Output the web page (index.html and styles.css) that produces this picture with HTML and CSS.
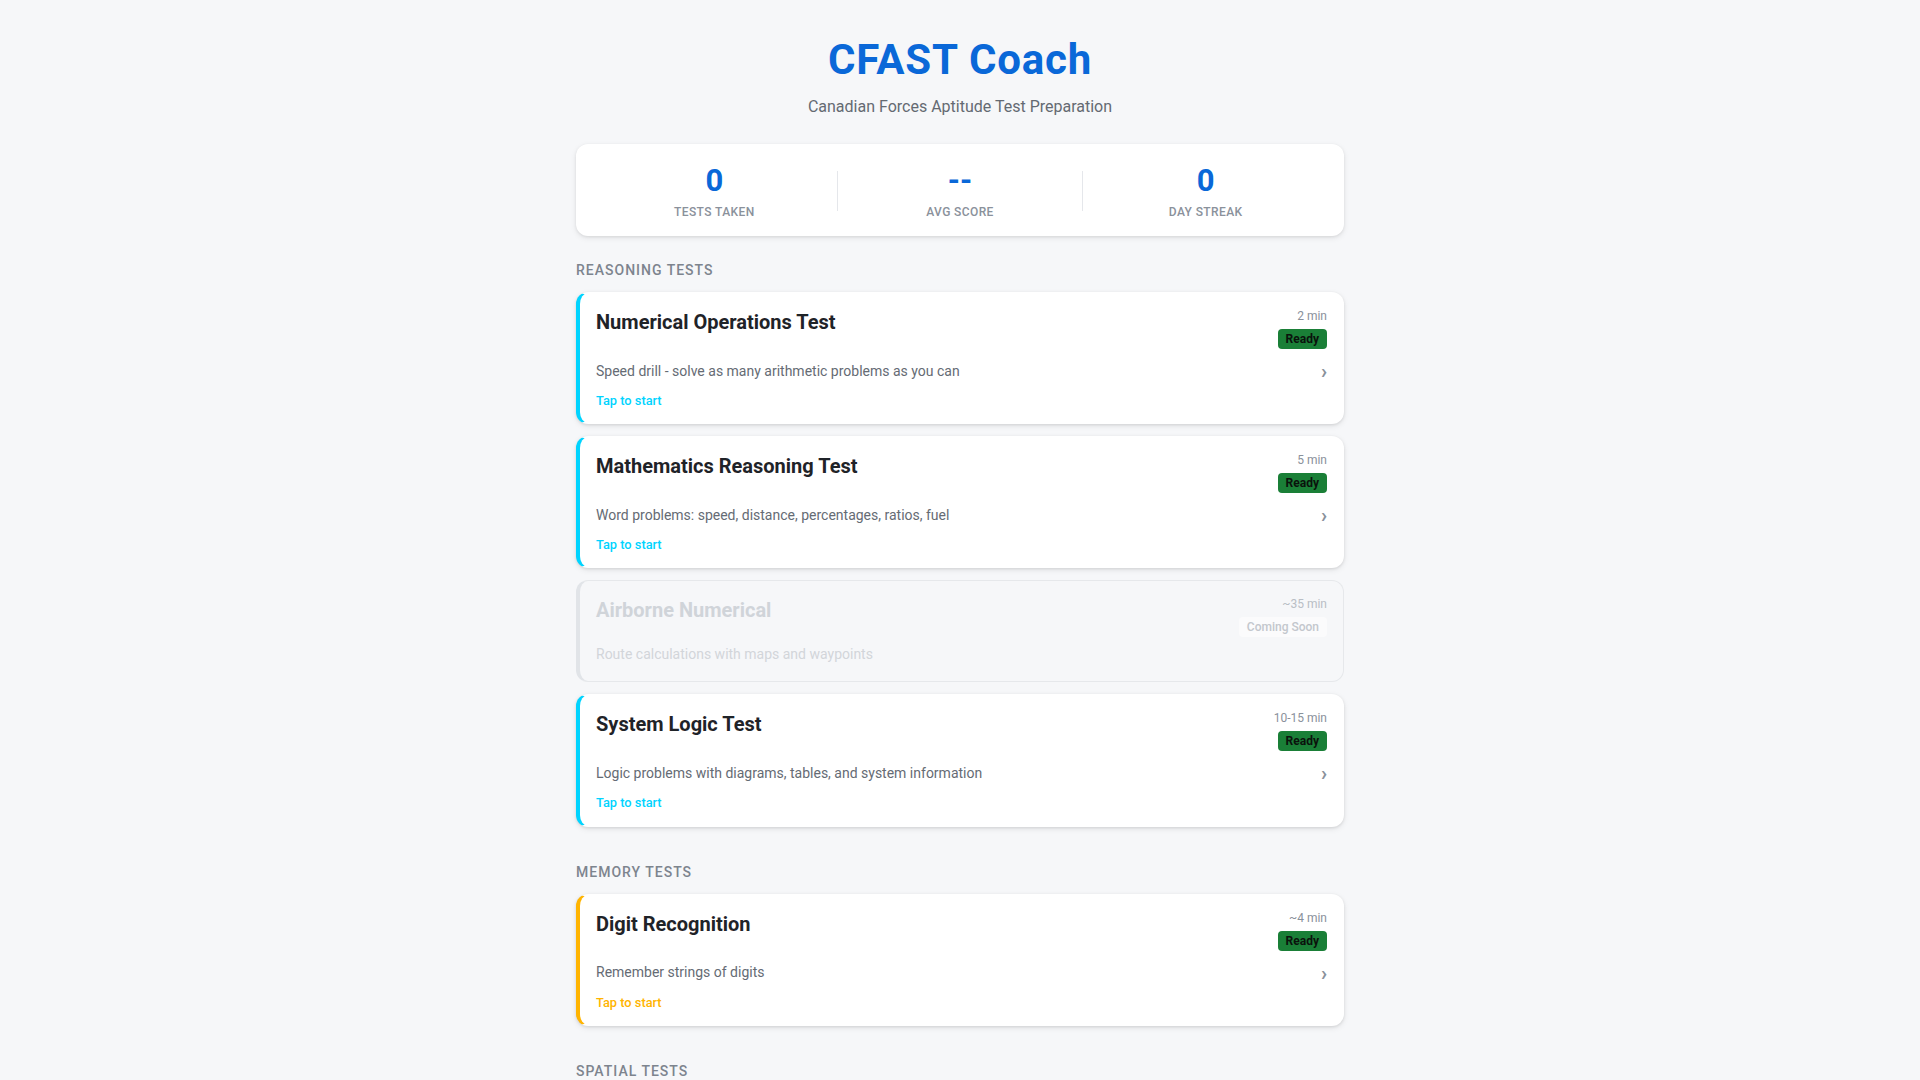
FILE: index.html
```html
<!DOCTYPE html>
<html lang="en">
<head>
    <meta charset="UTF-8">
    <meta name="viewport" content="width=device-width, initial-scale=1.0">
    <title>CFAST Coach</title>
    <link rel="stylesheet" href="styles.css">
</head>
<body>
<div class="app">
    <!-- Header -->
    <header class="header">
        <h1>CFAST Coach</h1>
        <p class="subtitle">Canadian Forces Aptitude Test Preparation</p>
    </header>

    <!-- Progress stats -->
    <div class="stats">
        <div class="stat">
            <div class="stat-value">0</div>
            <div class="stat-label">Tests Taken</div>
        </div>
        <div class="stat-divider"></div>
        <div class="stat">
            <div class="stat-value">--</div>
            <div class="stat-label">Avg Score</div>
        </div>
        <div class="stat-divider"></div>
        <div class="stat">
            <div class="stat-value">0</div>
            <div class="stat-label">Day Streak</div>
        </div>
    </div>

    <!-- Reasoning -->
    <div class="section">
        <h2 class="section-title">Reasoning Tests</h2>

        <div class="test-card reasoning">
            <div class="card-head">
                <h3 class="card-title">Numerical Operations Test</h3>
                <div class="card-meta">
                    <span class="duration">2 min</span>
                    <span class="badge ready">Ready</span>
                </div>
            </div>
            <div class="card-body">
                <p class="card-desc">Speed drill - solve as many arithmetic problems as you can</p>
                <span class="chevron">&#8250;</span>
            </div>
            <div class="card-cta">Tap to start</div>
        </div>

        <div class="test-card reasoning">
            <div class="card-head">
                <h3 class="card-title">Mathematics Reasoning Test</h3>
                <div class="card-meta">
                    <span class="duration">5 min</span>
                    <span class="badge ready">Ready</span>
                </div>
            </div>
            <div class="card-body">
                <p class="card-desc">Word problems: speed, distance, percentages, ratios, fuel</p>
                <span class="chevron">&#8250;</span>
            </div>
            <div class="card-cta">Tap to start</div>
        </div>

        <div class="test-card disabled">
            <div class="card-head">
                <h3 class="card-title">Airborne Numerical</h3>
                <div class="card-meta">
                    <span class="duration">~35 min</span>
                    <span class="badge soon">Coming Soon</span>
                </div>
            </div>
            <div class="card-body">
                <p class="card-desc">Route calculations with maps and waypoints</p>
            </div>
        </div>

        <div class="test-card reasoning">
            <div class="card-head">
                <h3 class="card-title">System Logic Test</h3>
                <div class="card-meta">
                    <span class="duration">10-15 min</span>
                    <span class="badge ready">Ready</span>
                </div>
            </div>
            <div class="card-body">
                <p class="card-desc">Logic problems with diagrams, tables, and system information</p>
                <span class="chevron">&#8250;</span>
            </div>
            <div class="card-cta">Tap to start</div>
        </div>
    </div>

    <!-- Memory -->
    <div class="section">
        <h2 class="section-title">Memory Tests</h2>

        <div class="test-card memory">
            <div class="card-head">
                <h3 class="card-title">Digit Recognition</h3>
                <div class="card-meta">
                    <span class="duration">~4 min</span>
                    <span class="badge ready">Ready</span>
                </div>
            </div>
            <div class="card-body">
                <p class="card-desc">Remember strings of digits</p>
                <span class="chevron">&#8250;</span>
            </div>
            <div class="card-cta">Tap to start</div>
        </div>
    </div>

    <!-- Spatial -->
    <div class="section">
        <h2 class="section-title">Spatial Tests</h2>

        <div class="test-card spatial">
            <div class="card-head">
                <h3 class="card-title">Spatial Ability Test</h3>
                <div class="card-meta">
                    <span class="duration">~10 min</span>
                    <span class="badge ready">Ready</span>
                </div>
            </div>
            <div class="card-body">
                <p class="card-desc">Mental rotation and 3D shape matching</p>
                <span class="chevron">&#8250;</span>
            </div>
            <div class="card-cta">Tap to start</div>
        </div>
    </div>
</div>
</body>
</html>
```

FILE: styles.css
```css
body {
    font-family: Roboto, "Liberation Sans", Arial, sans-serif;
    margin: 0;
    background-color: #f6f7f9;
    color: #1f2328;
    line-height: 1.5;
}

.app {
    max-width: 768px;
    margin: 0 auto;
    padding: 28px 0 40px;
}

/* header */
.header {
    text-align: center;
    margin-bottom: 25px;
}

.header h1 {
    margin: 0 0 4px;
    font-size: 42px;
    font-weight: 700;
    letter-spacing: 0.8px;
    color: #0a68d8;
}

.subtitle {
    margin: 0;
    font-size: 16px;
    color: #646a72;
}

/* stats */
.stats {
    display: flex;
    align-items: center;
    background: #fff;
    border-radius: 12px;
    padding: 17px 16px 16px;
    box-shadow: 0 1px 3px rgba(0, 0, 0, 0.08), 0 2px 6px rgba(0, 0, 0, 0.08);
    margin-bottom: 24px;
}

.stat {
    flex: 1;
    text-align: center;
}

.stat-value {
    font-size: 31px;
    font-weight: 700;
    line-height: 40px;
    color: #0a68d8;
}

.stat-label {
    margin-top: 3px;
    font-size: 12px;
    line-height: 16px;
    font-weight: 500;
    letter-spacing: 0.4px;
    text-transform: uppercase;
    color: #8a919b;
}

.stat-divider {
    width: 1px;
    height: 40px;
    background: #e5e7eb;
}

/* sections */
.section {
    margin-bottom: 35px;
}

.section-title {
    margin: 0 0 11px;
    font-size: 14px;
    font-weight: 500;
    letter-spacing: 1px;
    text-transform: uppercase;
    color: #7d848e;
}

/* test cards */
.test-card {
    background: #fff;
    border: 1px solid transparent;
    border-left: 4px solid #00d4ff;
    border-radius: 12px;
    padding: 14px 16px 13px;
    margin-bottom: 12px;
    box-shadow: 0 1px 3px rgba(0, 0, 0, 0.1), 0 2px 6px rgba(0, 0, 0, 0.08);
    cursor: pointer;
}

.test-card.memory {
    border-left-color: #ffb400;
}

.test-card.spatial {
    border-left-color: #8b5cf6;
}

.card-head {
    display: flex;
    justify-content: space-between;
    align-items: flex-start;
    margin-bottom: 7px;
}

.card-title {
    margin: 0;
    font-size: 20px;
    font-weight: 700;
    color: #1f2328;
}

.card-meta {
    display: flex;
    flex-direction: column;
    align-items: flex-end;
}

.duration {
    font-size: 12px;
    color: #8a919b;
}

.badge {
    margin-top: 4px;
    padding: 2px 8px;
    font-size: 12px;
    line-height: 16px;
    border-radius: 4px;
}

.badge.ready {
    background-color: #1a7f37;
    color: #0a120c;
    font-weight: 700;
}

.badge.soon {
    background-color: #fbfbfc;
    color: #c3c7cd;
    font-weight: 500;
}

.card-body {
    display: flex;
    align-items: center;
    justify-content: space-between;
}

.card-desc {
    margin: 0;
    font-size: 14px;
    color: #656b74;
}

.chevron {
    font-size: 20px;
    font-weight: 700;
    color: #8a919b;
}

.card-cta {
    margin-top: 5px;
    font-size: 12.8px;
    font-weight: 500;
    color: #00d4ff;
}

.test-card.memory .card-cta {
    color: #ffb400;
}

.test-card.spatial .card-cta {
    color: #8b5cf6;
}

/* not available yet */
.test-card.disabled {
    background: #f6f7f9;
    border-color: #e6e8eb;
    border-left-color: #e1e4e8;
    padding-bottom: 16px;
    box-shadow: none;
    cursor: default;
}

.test-card.disabled .card-title {
    color: #d0d4d9;
}

.test-card.disabled .card-desc {
    color: #d2d5da;
}

.test-card.disabled .duration {
    color: #b9bec5;
}
```
